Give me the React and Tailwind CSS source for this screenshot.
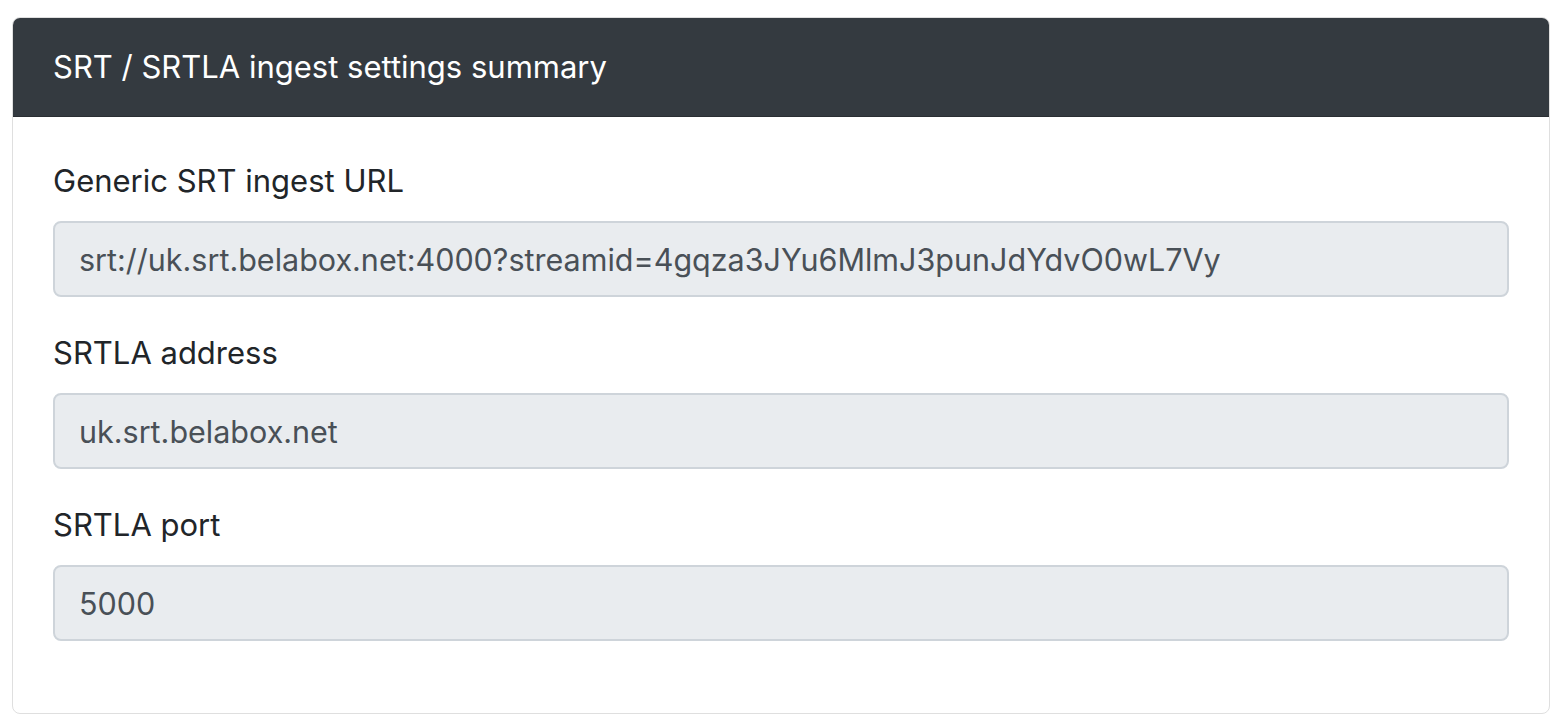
import React from 'react';

const fields = [
  { label: 'Generic SRT ingest URL', value: 'srt://uk.srt.belabox.net:4000?streamid=4gqza3JYu6MlmJ3punJdYdvO0wL7Vy' },
  { label: 'SRTLA address', value: 'uk.srt.belabox.net' },
  { label: 'SRTLA port', value: '5000' },
];

const App = () => {
  return (
    <div className="min-h-screen bg-white px-[12px] pt-[17px] font-['Inter',sans-serif]">
      <div className="overflow-hidden rounded-[8px] border border-[#dfdfdf] bg-white">
        {/* Header */}
        <div className="border-b border-[#2a2e33] bg-[#343a40] px-[40px] py-[25px] text-[31px] leading-[48px] text-white">
          SRT / SRTLA ingest settings summary
        </div>

        {/* Body */}
        <div className="p-[40px]">
          {fields.map((f) => (
            <div key={f.label} className="mb-[32px]">
              <label className="mb-[16px] block text-[31px] leading-[48px] text-[#212529]">{f.label}</label>
              <input
                readOnly
                value={f.value}
                className="block h-[76px] w-full rounded-[8px] border-2 border-[#ced4da] bg-[#e9ecef] px-[24px] text-[30.5px] text-[#495057] outline-none"
              />
            </div>
          ))}
        </div>
      </div>
    </div>
  );
};

export default App;
